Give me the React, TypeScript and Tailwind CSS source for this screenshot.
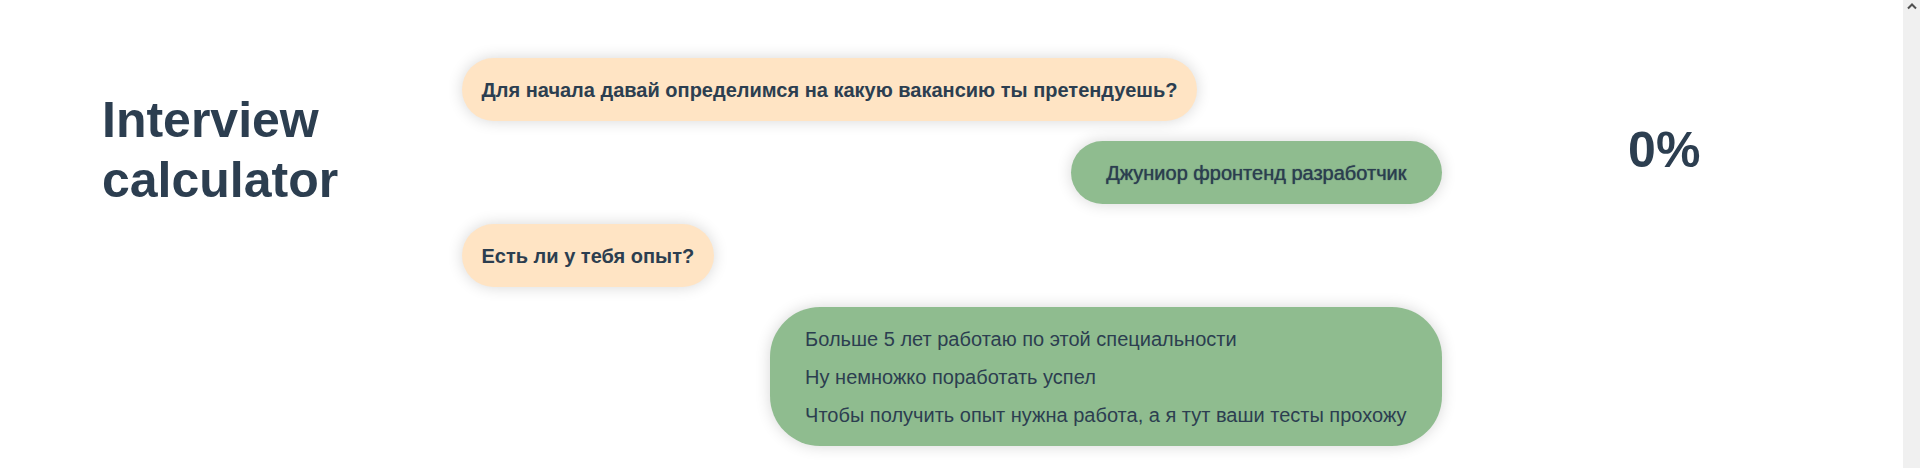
import React from "react";

type Answer = { text: string; active?: boolean };
type Message =
  | { kind: "question"; text: string }
  | { kind: "answers"; options: Answer[] };

const messages: Message[] = [
  { kind: "question", text: "Для начала давай определимся на какую вакансию ты претендуешь?" },
  { kind: "answers", options: [{ text: "Джуниор фронтенд разработчик", active: true }] },
  { kind: "question", text: "Есть ли у тебя опыт?" },
  {
    kind: "answers",
    options: [
      { text: "Больше 5 лет работаю по этой специальности" },
      { text: "Ну немножко поработать успел" },
      { text: "Чтобы получить опыт нужна работа, а я тут ваши тесты прохожу" },
    ],
  },
];

function Question({ text }: { text: string }) {
  return (
    <p className="self-start rounded-[50px] bg-[#ffe4c4] px-5 pt-[21px] pb-[19px] font-bold shadow-[0_0_15px_rgba(0,0,0,0.16)]">
      {text}
    </p>
  );
}

function Answers({ options }: { options: Answer[] }) {
  return (
    <div className="flex flex-col items-start gap-[15px] self-end rounded-[50px] bg-[#8fbc8f] px-[35px] pt-[21px] pb-[19px] shadow-[0_0_15px_rgba(0,0,0,0.16)]">
      {options.map((o) => (
        <button
          key={o.text}
          type="button"
          className={
            o.active
              ? "cursor-pointer text-left [text-shadow:0_0_1px_#2c3e50]"
              : "cursor-pointer text-left hover:[text-shadow:0_0_1px_#2c3e50]"
          }
        >
          {o.text}
        </button>
      ))}
    </div>
  );
}

export default function App() {
  return (
    <div className="flex min-h-screen bg-white font-['Liberation_Sans',Arial,sans-serif] text-[#2c3e50]">
      <main className="grid flex-1 grid-cols-[1fr_minmax(0,980px)_1fr] items-start">
        <h1 className="pt-[90px] pr-16 pl-[102px] text-[50px] leading-[60px] font-bold">
          Interview calculator
        </h1>
        <section className="flex flex-col gap-5 pt-[58px] text-[20px] leading-[23px]">
          {messages.map((m, i) =>
            m.kind === "question" ? (
              <Question key={i} text={m.text} />
            ) : (
              <Answers key={i} options={m.options} />
            ),
          )}
        </section>
        <p className="pt-[120px] pr-4 text-center text-[50px] leading-[60px] font-bold">
          0%
        </p>
      </main>
      <div className="flex w-[17px] shrink-0 justify-center bg-[#f0f0f0] pt-[2px]" aria-hidden="true">
        <svg width="10" height="8" viewBox="0 0 10 8" fill="none">
          <path d="M1 6.5 5 2.5 9 6.5" stroke="#505050" strokeWidth="2" />
        </svg>
      </div>
    </div>
  );
}
